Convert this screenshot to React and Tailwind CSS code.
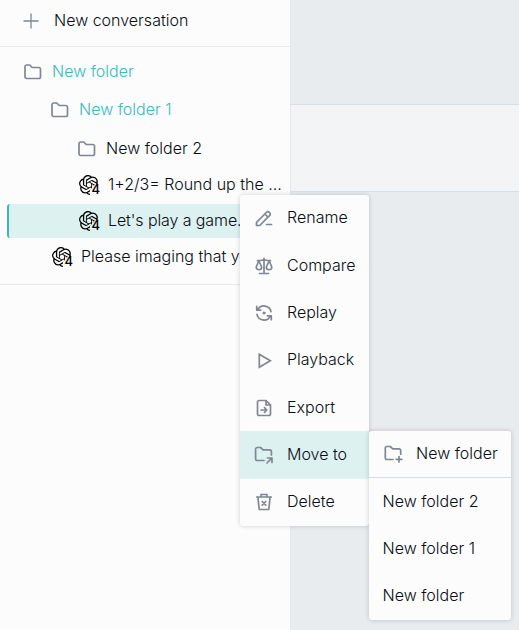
import React from 'react';
import { SiOpenai } from 'react-icons/si';

function StrokeIcon({ children, className = '' }) {
  return (
    <svg className={`shrink-0 ${className}`} width="20" height="20" viewBox="0 0 20 20" fill="none" stroke="currentColor" strokeWidth="1.7" strokeLinecap="round" strokeLinejoin="round">
      {children}
    </svg>
  );
}

function PencilIcon() {
  return (
    <StrokeIcon>
      <path d="M2.500 16.500v-3.200L12.300 3.500a2.250 2.250 0 0 1 3.200 3.200L5.700 16.500zM10.800 5l3.200 3.200M12.500 15.500h5" />
    </StrokeIcon>
  );
}

function ScaleIcon() {
  return (
    <StrokeIcon>
      <path d="M3.500 4.600c3 .3 4.500-.4 6.500-.9c2 .5 3.500 1.200 6.500.9M10 2.300v15M5.500 17.500h9" />
      <path d="M4.800 5L2.200 11a2.750 2.750 0 0 0 5.500 0zM15.200 5l-2.900 6a2.750 2.750 0 0 0 5.500 0z" />
    </StrokeIcon>
  );
}

function ReplayIcon() {
  return (
    <StrokeIcon>
      <path d="M17 8.700A7.100 7.100 0 0 0 3.800 6.700M2.700 3.300v3.900h3.900M3 11.300a7.100 7.100 0 0 0 13.200 2M17.300 16.700v-3.900h-3.900" />
      <circle cx="10" cy="10" r="1.100" fill="currentColor" strokeWidth="1" />
    </StrokeIcon>
  );
}

function PlayIcon() {
  return (
    <StrokeIcon>
      <path strokeLinejoin="miter" d="M5.300 3.200v13L16.300 9.700z" />
    </StrokeIcon>
  );
}

function ExportIcon() {
  return (
    <StrokeIcon>
      <path d="M12 2.500H5.200a1.700 1.700 0 0 0-1.700 1.700v11.600a1.700 1.700 0 0 0 1.700 1.700h9.600a1.700 1.700 0 0 0 1.700-1.700V7zM12 2.500V7h4.500" />
      <path d="M7 12h5.500M10.500 9.700l2.300 2.300l-2.300 2.300" />
    </StrokeIcon>
  );
}

function MoveIcon() {
  return (
    <StrokeIcon>
      <path d="M10 15.500H3.300a1.700 1.700 0 0 1-1.700-1.700V4.200a1.700 1.700 0 0 1 1.700-1.700h3.200l2.600 2.300h6.600a1.700 1.700 0 0 1 1.700 1.700v3.500" />
      <path d="M13 18l4.800-4.800M13.500 13h4.500v4.500" />
    </StrokeIcon>
  );
}

function TrashIcon() {
  return (
    <StrokeIcon>
      <path d="M2.700 5h14.600M7 4.800V2.500h6v2.300M3.900 5.300l1.300 12.200h9.600L16.100 5.300M8.200 9.500l3.600 3.600M11.800 9.500l-3.600 3.600" />
    </StrokeIcon>
  );
}

function FolderPlusIcon() {
  return (
    <StrokeIcon>
      <path d="M10 15.500H4a1.700 1.700 0 0 1-1.700-1.700V4.200A1.700 1.700 0 0 1 4 2.500h3.200l2.600 2.300h6.200a1.700 1.700 0 0 1 1.700 1.700v3.700M16 12.500v5.500M13.200 15.300h5.600" />
    </StrokeIcon>
  );
}

function ModelIcon() {
  return (
    <span className="relative block size-5 shrink-0 text-black">
      <SiOpenai size={20} className="[clip-path:polygon(0_0,100%_0,100%_46%,82%_46%,55%_75%,55%_100%,0_100%)]" />
      <span className="absolute -right-px bottom-0 text-[13px] leading-[11px] font-medium">4</span>
    </span>
  );
}

function Folder({ name, className }) {
  return (
    <div className={`flex h-[34px] items-center gap-[9px] ${className}`}>
      <StrokeIcon className="text-[#7f8792]">
        <path d="M3.700 3h3l2.500 2.500h6.600a1.700 1.700 0 0 1 1.700 1.700v7.600a1.700 1.700 0 0 1-1.700 1.700H3.700A1.700 1.700 0 0 1 2 14.800V4.700A1.700 1.700 0 0 1 3.700 3z" />
      </StrokeIcon>
      <span className="-mt-0.5 whitespace-nowrap">{name}</span>
    </div>
  );
}

function Conversation({ name, className }) {
  return (
    <div className={`flex h-[34px] items-center gap-[9px] border-l-2 pr-2 ${className}`}>
      <ModelIcon />
      <span className="-mt-0.5 truncate">{name}</span>
    </div>
  );
}

const actions = [
  ['Rename', <PencilIcon />],
  ['Compare', <ScaleIcon />],
  ['Replay', <ReplayIcon />],
  ['Playback', <PlayIcon />],
  ['Export', <ExportIcon />],
  ['Move to', <MoveIcon />],
  ['Delete', <TrashIcon />],
];

export default function App() {
  return (
    <div className="relative flex h-[630px] w-[519px] overflow-hidden bg-[#e8ecef] font-['Inter',sans-serif] text-base font-light text-[#090d13]">
      <aside className="flex w-[291px] shrink-0 flex-col border-r border-[#e4e8eb] bg-[#fcfcfc]">
        <div className="flex h-[47px] items-center gap-[14px] border-b border-[#e8eaec] pb-[5px] pl-[22px]">
          <svg width="18" height="18" viewBox="0 0 18 18" stroke="#7f8792" strokeWidth="1.3">
            <path d="M9 1.500v15M1.500 9h15" />
          </svg>
          <span className="-mt-0.5">New conversation</span>
        </div>
        <div className="flex flex-col border-b border-[#e8eaec] pt-2 pb-[10px]">
          <Folder name="New folder" className="pl-[23px] text-[#37babc]" />
          <Folder name="New folder 1" className="mt-1 pl-[50px] text-[#37babc]" />
          <Folder name="New folder 2" className="mt-[5px] pl-[77px]" />
          <Conversation name="1+2/3= Round up the answer" className="ml-[7px] mt-[2px] border-transparent pl-[70px]" />
          <Conversation name="Let's play a game." className="ml-[7px] mt-[2px] rounded-l-[3px] border-[#37babc] bg-[#ddf1f0] pl-[70px] tracking-[-0.1px]" />
          <Conversation name="Please imaging that you are" className="ml-[7px] mt-[2px] border-transparent pl-[43px]" />
        </div>
      </aside>
      <main className="flex-1 pt-[104px]">
        <div className="h-[88px] border-y border-[#dadfe4] bg-[#f3f4f6]" />
      </main>

      <div className="absolute left-[240px] top-[195px] w-[129px] overflow-hidden rounded-[3px] bg-[#fcfcfc] shadow-[0_0_5px_rgba(9,13,19,0.18)]">
        {actions.map(([name, icon]) => (
          <div key={name} className={`flex h-[47.3px] items-center gap-[13px] pl-[14px] ${name === 'Move to' ? 'bg-[#ddf1f0]' : ''}`}>
            <span className="text-[#7f8792]">{icon}</span>
            <span className="-mt-[2.4px] whitespace-nowrap">{name}</span>
          </div>
        ))}
      </div>

      <div className="absolute left-[369px] top-[431px] w-[142px] rounded-[3px] bg-[#fcfcfc] shadow-[0_0_5px_rgba(9,13,19,0.18)]">
        <div className="flex h-[47px] items-center gap-[13px] border-b border-[#d8dde3] pl-[14px]">
          <span className="text-[#7f8792]"><FolderPlusIcon /></span>
          <span className="-mt-0.5">New folder</span>
        </div>
        {['New folder 2', 'New folder 1', 'New folder'].map((name) => (
          <div key={name} className="flex h-[47.3px] items-center pb-0.5 pl-[13.5px]">{name}</div>
        ))}
      </div>
    </div>
  );
}
